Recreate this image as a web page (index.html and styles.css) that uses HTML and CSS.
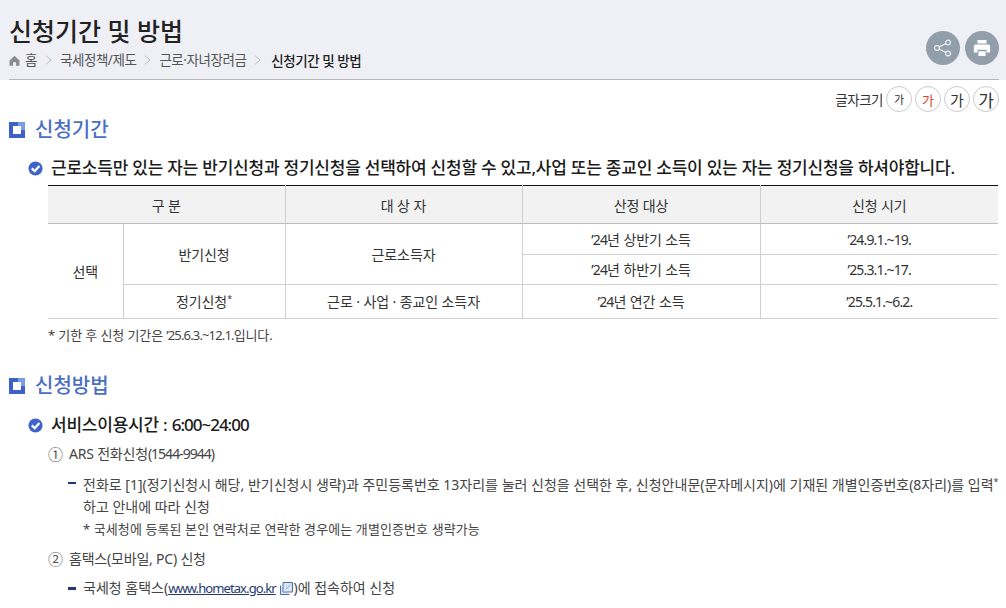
FILE: index.html
```html
<!DOCTYPE html>
<html lang="ko">
<head>
<meta charset="utf-8">
<title>신청기간 및 방법</title>
<link rel="stylesheet" href="styles.css">
</head>
<body>
<header class="top">
  <div class="top-inner">
    <div class="top-text">
      <h1>신청기간 및 방법</h1>
      <nav class="crumbs">
        <svg class="home" viewBox="0 0 12 12"><path d="M6 .8 .6 6v5.600h3.800V8h3.200v3.600h3.800V6z"/></svg>
        <span class="crumb">홈</span>
        <svg class="chev" viewBox="0 0 8 12"><path d="M1 1l6 5-6 5"/></svg>
        <span class="crumb">국세정책/제도</span>
        <svg class="chev" viewBox="0 0 8 12"><path d="M1 1l6 5-6 5"/></svg>
        <span class="crumb">근로·자녀장려금</span>
        <svg class="chev" viewBox="0 0 8 12"><path d="M1 1l6 5-6 5"/></svg>
        <strong class="crumb-now">신청기간 및 방법</strong>
      </nav>
    </div>
    <div class="top-btns">
      <span class="round"><svg viewBox="0 0 20 20" width="20" height="20" fill="none" stroke="#e9ecf0" stroke-width="1.200"><circle cx="15" cy="4.500" r="2.400"/><circle cx="15" cy="15.500" r="2.400"/><circle cx="4" cy="10" r="2.400"/><path d="M6.200 8.900 12.800 5.600M6.200 11.100l6.600 3.300"/></svg></span>
      <span class="round"><svg viewBox="0 0 20 20" width="18" height="18" fill="#fff"><path d="M5 1h10v4H5zM3 6h14a2 2 0 0 1 2 2v7h-4v-3H5v3H1V8a2 2 0 0 1 2-2zM6 13.500h8V19H6z"/></svg></span>
    </div>
  </div>
</header>

<main class="content">
  <div class="fontsize">
    <span class="fs-label">글자크기</span>
    <span class="fs fs1">가</span>
    <span class="fs fs2">가</span>
    <span class="fs fs3">가</span>
    <span class="fs fs4">가</span>
  </div>

  <h2 class="sec"><span class="sq"></span>신청기간</h2>
  <p class="lead first"><svg class="chk" viewBox="0 0 16 16"><circle cx="8" cy="8" r="7.500" fill="#3f63c8"/><path d="M4 7.800 7.200 10.800 12.200 5.400" fill="none" stroke="#fff" stroke-width="2.400"/></svg><span>근로소득만 있는 자는 반기신청과 정기신청을 선택하여 신청할 수 있고,사업 또는 종교인 소득이 있는 자는 정기신청을 하셔야합니다.</span></p>

  <table class="tbl">
    <colgroup><col class="c1"><col class="c2"><col class="c3"><col class="c4"><col class="c5"></colgroup>
    <thead>
      <tr><th colspan="2">구 분</th><th>대 상 자</th><th>산정 대상</th><th>신청 시기</th></tr>
    </thead>
    <tbody>
      <tr class="r1"><td rowspan="3">선택</td><td rowspan="2">반기신청</td><td rowspan="2">근로소득자</td><td><span class="tight">’24</span>년 상반기 소득</td><td class="tight">’24.9.1.~19.</td></tr>
      <tr class="r2"><td><span class="tight">’24</span>년 하반기 소득</td><td class="tight">’25.3.1.~17.</td></tr>
      <tr class="r3"><td>정기신청<sup>*</sup></td><td>근로 · 사업 · 종교인 소득자</td><td><span class="tight">’24</span>년 연간 소득</td><td class="tight">’25.5.1.~6.2.</td></tr>
    </tbody>
  </table>
  <p class="tnote">* 기한 후 신청 기간은 <span class="tight">’25.6.3.~12.1.</span>입니다.</p>

  <h2 class="sec sec2"><span class="sq"></span>신청방법</h2>
  <p class="lead lead2"><svg class="chk" viewBox="0 0 16 16"><circle cx="8" cy="8" r="7.500" fill="#3f63c8"/><path d="M4 7.800 7.200 10.800 12.200 5.400" fill="none" stroke="#fff" stroke-width="2.400"/></svg><span>서비스이용시간 : <span class="tight">6:00~24:00</span></span></p>

  <p class="num"><span class="no">①</span><span>ARS 전화신청<span class="tight">(1544-9944)</span></span></p>
  <div class="dash">
    <p class="nowrap">전화로 [1](정기신청시 해당, 반기신청시 생략)과 주민등록번호 13자리를 눌러 신청을 선택한 후, 신청안내문(문자메시지)에 기재된 개별인증번호(8자리)를 입력<sup>*</sup><br>하고 안내에 따라 신청</p>
    <p class="star">* 국세청에 등록된 본인 연락처로 연락한 경우에는 개별인증번호 생략가능</p>
  </div>
  <p class="num num2"><span class="no">②</span><span>홈택스(모바일, PC) 신청</span></p>
  <div class="dash dash2">
    <p>국세청 홈택스(<a href="#">www.hometax.go.kr</a> <svg class="ext" viewBox="0 0 13 13"><path d="M.5 3.500v9h9M3 .5h9.500V10H3z"/><path class="ext-arrow" d="M5.500 7.500 10.500 2.500"/></svg>)에 접속하여 신청</p>
  </div>
</main>
</body>
</html>
```

FILE: styles.css
```css
* { box-sizing: border-box; }
html, body { margin: 0; padding: 0; }
body {
  width: 1006px;
  height: 608px;
  overflow: hidden;
  background: #fff;
  color: #333;
  font-family: "Noto Sans", "Noto Sans CJK KR", sans-serif;
  font-size: 14px;
  letter-spacing: 0;
}
p, h1, h2 { margin: 0; }
.tight { letter-spacing: -0.85px; }
.nowrap { white-space: nowrap; }

.top { background: #eff0f5; height: 80px; padding: 0 7px 0 9px; }
.top-inner {
  display: flex;
  justify-content: space-between;
  height: 80px;
  border-bottom: 1px solid #b5b6ba;
}
.top h1 {
  font-size: 25px;
  line-height: 32px;
  font-weight: 500;
  color: #222;
  letter-spacing: 0;
  margin-top: 15px;
}
.crumbs { display: flex; align-items: center; height: 20px; margin-top: 3px; color: #555; font-size: 13.500px; letter-spacing: -0.45px; }
.home { width: 11px; height: 11px; fill: #8a8d92; margin-right: 5px; }
.crumb { line-height: 20px; }
.chev { width: 7px; height: 12px; margin: 0 8px; fill: none; stroke: #b0b2b6; stroke-width: 1; }
.crumb-now { font-weight: 500; color: #222; margin-left: 2px; }
.top-btns { display: flex; gap: 5px; padding-top: 31px; }
.round {
  width: 34px;
  height: 34px;
  border-radius: 50%;
  background: #939eab;
  display: flex;
  align-items: center;
  justify-content: center;
}

.content { padding: 0 7px 0 9px; }
.fontsize { display: flex; justify-content: flex-end; align-items: center; gap: 3px; height: 32px; padding-top: 6px; }
.fs-label { font-size: 13.500px; letter-spacing: -0.5px; color: #333; }
.fs {
  width: 26px;
  height: 26px;
  border: 1px solid #ccc;
  border-radius: 50%;
  display: flex;
  align-items: center;
  justify-content: center;
  color: #333;
  background: #fff;
}
.fs1 { font-size: 11px; }
.fs2 { font-size: 13px; color: #d8432c; }
.fs3 { font-size: 15px; }
.fs4 { font-size: 17px; }

.sec {
  display: flex;
  align-items: center;
  font-size: 20px;
  line-height: 28px;
  font-weight: 500;
  color: #4a6fc4;
  letter-spacing: 0;
  margin-top: 4px;
}
.sq {
  width: 16px;
  height: 16px;
  background: #3f5fcb;
  margin-right: 10px;
  position: relative;
  display: block;
}
.sq::before {
  content: "";
  position: absolute;
  right: 0;
  top: 0;
  width: 7px;
  height: 8px;
  background: #7b9de6;
}
.sq::after {
  content: "";
  position: absolute;
  left: 4px;
  top: 4px;
  width: 8px;
  height: 8px;
  background: #fff;
}
.lead {
  margin: 12px 0 0 19px;
  font-size: 17px;
  line-height: 24px;
  font-weight: 500;
  color: #1b1b1b;
  display: flex;
  align-items: center;
  letter-spacing: -0.23px;
  white-space: nowrap;
}
.lead .tight { letter-spacing: -1px; }
.lead2 { margin-top: 13px; }
.chk { width: 15px; height: 15px; margin-right: 8px; flex: none; }

.tbl {
  margin: 5px 0 0 39px;
  width: 950px;
  border-collapse: collapse;
  table-layout: fixed;
  border-top: 1px solid #111;
  font-size: 14px;
  letter-spacing: -0.1px;
}
.c1 { width: 75px; }
.c2 { width: 162px; }
.c3 { width: 237px; }
.c4 { width: 238px; }
.c5 { width: 238px; }
.tbl th, .tbl td {
  border: 1px solid #cfcfcf;
  text-align: center;
  font-weight: 400;
  padding: 0;
  color: #333;
}
.tbl th:first-child, .tbl td:first-child { border-left: 0; }
.tbl th:last-child, .tbl td:last-child { border-right: 0; }
.tbl th { background: #f2f2f2; height: 38px; border-bottom-color: #bdbdbd; border-top: 0; }
.r1 td { height: 31px; }
.r2 td { height: 30px; padding-bottom: 1px; }
.r3 td { height: 34px; padding-bottom: 1px; }
.tbl sup { font-size: 9px; line-height: 0; vertical-align: 5px; }
.tbl td.tight { letter-spacing: -0.85px; }

.tnote { margin: 6px 0 0 39px; font-size: 13px; line-height: 20px; color: #444; letter-spacing: -0.1px; }
.sec2 { margin-top: 27px; }

.num { margin: 6px 0 0 39px; display: flex; align-items: center; line-height: 22px; color: #444; letter-spacing: -0.2px; }
.no {
  width: 21px;
  font-size: 15px;
  color: #555;
}
.num .tight { letter-spacing: -1px; }
.dash { margin: 9px 0 0 59px; padding-left: 15px; position: relative; line-height: 22px; color: #444; }
.dash::before {
  content: "";
  position: absolute;
  left: 0;
  top: 8px;
  width: 8px;
  height: 2px;
  background: #1f3a6e;
}
.dash sup { font-size: 9px; line-height: 0; vertical-align: 5px; }
.star { font-size: 13px; letter-spacing: 0.1px; }
.num2 { margin-top: 8px; }
.dash2 { margin-top: 7px; }
.dash2::before { top: 10px; height: 3px; }
.dash a { color: #1f3a6e; text-decoration: underline; font-size: 13px; letter-spacing: -0.900px; }
.ext { width: 13px; height: 13px; fill: #dbe6f5; stroke: #4a6fa8; stroke-width: 1; vertical-align: -2px; margin-left: 1px; }
.ext-arrow { stroke: #8fa9d0; }
```
